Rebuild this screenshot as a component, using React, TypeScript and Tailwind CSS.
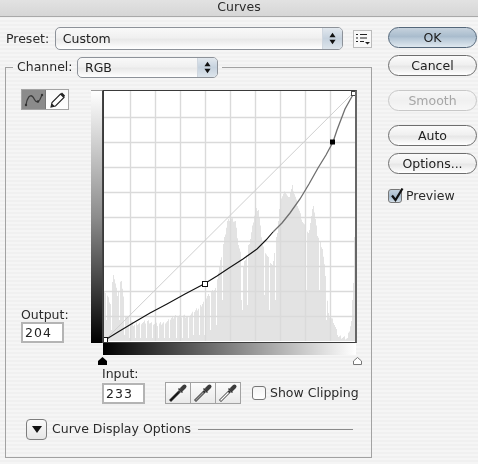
import type { ReactNode } from "react"

const envelope: [number, number][] = [
  [104, 292], [105, 290], [110, 302], [113, 272], [117, 293], [121, 278], [125, 313], [133, 323],
  [147, 320], [157, 323], [167, 320], [175, 314], [188, 315], [200, 305], [207, 295], [215, 287],
  [220, 260], [227, 220], [230, 217], [235, 220], [238, 243], [243, 265], [250, 237], [255, 208],
  [258, 208], [262, 243], [267, 255], [272, 265], [277, 230], [280, 197], [285, 190], [288, 197],
  [292, 185], [297, 203], [302, 220], [308, 233], [313, 203], [317, 233], [322, 247], [325, 273],
  [328, 313], [333, 320], [338, 335], [347, 337], [351, 320], [353, 280], [354, 235], [355, 300],
]

// notches in the comb: page x -> top of the short bar
const lowBars: Record<number, number> = {
  106: 320, 111: 330, 119: 320, 124: 335, 129: 338, 135: 338, 140: 338, 146: 338, 152: 338, 158: 338,
  164: 338, 169: 338, 176: 338, 182: 338, 188: 338, 193: 335, 199: 335, 204: 335, 210: 330, 216: 325,
  222: 300, 241: 300, 242: 310, 247: 305, 264: 295, 269: 310, 275: 300, 306: 290, 319: 290, 326: 320,
}

function topAt(x: number) {
  if (lowBars[x]) return lowBars[x]
  for (let i = 1; i < envelope.length; i++) {
    const [x1, y1] = envelope[i]
    const [x0, y0] = envelope[i - 1]
    if (x <= x1) return y0 + ((y1 - y0) * (x - x0)) / (x1 - x0) + ((x * 7) % 4)
  }
  return 341
}

const histogram = Array.from({ length: 251 }, (_, i) => {
  const x = 104 + i
  return `M${x} ${topAt(x).toFixed(1)}V341H${x + 1}V${topAt(x).toFixed(1)}Z`
}).join("")

const gridX = [130, 155, 180, 205, 230, 255, 280, 305, 330]
const gridY = [117, 142, 167, 192, 217, 241, 266, 291, 316]

const darkCurve =
  "105,340 118,332 133,323 150,313 167,304 185,294 204,284 217,276 229,268 243,259 257,249 266,240 273,232"
const lightCurve = "273,232 282,223 290,213 300,199 309,184 318,168 326,155 333,142 337,130 345,109 350,100 354,93"

function Graph() {
  return (
    <div className="w-[254px] h-[253px] border border-[#3a3a3a] border-r-2 border-r-[#666] bg-white">
      <svg viewBox="104 91 251 251" className="block w-[251px] h-[251px]">
        <path d={histogram} fill="#e3e3e3" />
        {gridX.map((x) => (
          <line key={x} x1={x + 0.5} x2={x + 0.5} y1={91} y2={341} stroke="#dadada" strokeWidth={1.4} />
        ))}
        {gridY.map((y) => (
          <line key={y} x1={104} x2={355} y1={y + 0.5} y2={y + 0.5} stroke="#dadada" strokeWidth={1.4} />
        ))}
        <line x1={104} y1={341} x2={355} y2={91} stroke="#cfcfcf" strokeWidth={1} />
        <polyline points={darkCurve} fill="none" stroke="#111" strokeWidth={1.1} />
        <polyline points={lightCurve} fill="none" stroke="#6f6f6f" strokeWidth={1.3} />
        <rect x={102.5} y={337.5} width={5} height={5} fill="#fff" stroke="#111" />
        <rect x={202.5} y={281.5} width={5} height={5} fill="#fff" stroke="#111" />
        <rect x={330} y={139.5} width={5} height={5} fill="#000" />
        <rect x={351.5} y={91.5} width={4} height={4} fill="#fff" stroke="#444" />
      </svg>
    </div>
  )
}

function AquaButton({
  children,
  variant = "normal",
  className = "",
}: {
  children: ReactNode
  variant?: "normal" | "default" | "disabled"
  className?: string
}) {
  const tone =
    variant === "default"
      ? "border-[#54677a] bg-[linear-gradient(#c6d2dd,#a9bccd_45%,#b6c7d6_55%,#dfe8ef)] text-[#1c1c1c]"
      : variant === "disabled"
        ? "border-[#c8c8c8] bg-[linear-gradient(#f7f7f7,#f0f0f0_50%,#f7f7f7)] text-[#a6a6a6]"
        : "border-[#6e6e6e] bg-[linear-gradient(#fbfbfb,#f0f0f0_45%,#e7e7e7_55%,#ffffff)] text-[#222]"
  return (
    <button
      className={`w-[89px] h-[21px] rounded-full border text-center leading-[18px] ${tone} ${className}`}
    >
      {children}
    </button>
  )
}

function Stepper() {
  return (
    <svg viewBox="0 0 8 14" className="w-[7px] h-[13px]">
      <path d="M4 0.5 7.5 5.5H0.5Z M4 13.5 7.5 8.5H0.5Z" fill="#111" />
    </svg>
  )
}

function PopUp({ label, className }: { label: string; className: string }) {
  return (
    <div
      className={`flex items-stretch rounded-[5px] border border-[#8d9299] overflow-hidden bg-[linear-gradient(#f9f9f9,#f0f0f0_45%,#e9e9e9_55%,#fff)] ${className}`}
    >
      <span className="flex-1 pl-[7px] pt-[2px] self-center text-[#222]">{label}</span>
      <span className="w-[20px] flex items-center justify-center border-l border-[#d0d7df] bg-[linear-gradient(#e2e8ee,#c6d2de_50%,#dde5ec)]">
        <Stepper />
      </span>
    </div>
  )
}

function TextBox({ value }: { value: string }) {
  return (
    <div className="w-[43px] h-[21px] border-2 border-[#b4b4b4] bg-white pl-[2px] leading-[17px] tracking-[1px] text-[#222]">
      {value}
    </div>
  )
}

function Checkbox({ checked = false }: { checked?: boolean }) {
  return (
    <span
      className={`relative w-[14px] h-[14px] rounded-[3px] border border-[#777] shrink-0 ${
        checked
          ? "bg-[linear-gradient(#c3d0dc,#a7bbcd_55%,#d3dee8)]"
          : "bg-[linear-gradient(#f4f4f4,#fff)]"
      }`}
    >
      {checked && (
        <svg viewBox="0 0 16 16" className="absolute -top-[3px] left-0 w-[16px] h-[16px]">
          <path d="M3 8.5 6.5 13 13.5 1.5" fill="none" stroke="#111" strokeWidth={2.2} />
        </svg>
      )}
    </span>
  )
}

function Eyedropper({ liquid }: { liquid: string }) {
  return (
    <button className="-ml-px first:ml-0 w-[26px] h-[22px] flex items-center justify-center border border-[#a2a2a2] bg-[linear-gradient(#fcfcfc,#e9e9e9)]">
      <svg viewBox="0 0 20 20" className="w-[20px] h-[20px]">
        <line x1={2} y1={18} x2={12} y2={8} stroke="#333" strokeWidth={2.8} />
        <line x1={2.5} y1={17.5} x2={10.5} y2={9.5} stroke={liquid} strokeWidth={1.4} />
        <line x1={10.5} y1={5.5} x2={14.5} y2={9.5} stroke="#333" strokeWidth={1.6} />
        <line x1={14} y1={6} x2={16.5} y2={3.5} stroke="#3d3d3d" strokeWidth={4} strokeLinecap="round" />
      </svg>
    </button>
  )
}

function ToolButtons() {
  return (
    <div className="flex w-[48px] h-[21px] border border-[#a4a4a4]">
      <div className="w-[24px] bg-[#8b8b8b] flex items-center justify-center border-r border-[#777]">
        <svg viewBox="0 0 20 16" className="w-[20px] h-[16px]">
          <path d="M2 13C3 6 6 2 8.5 4.5S11 11 14 9.5 17 4 18 3" fill="none" stroke="#3a3a3a" strokeWidth={1.3} />
          <circle cx={2} cy={13} r={1.2} fill="#333" />
          <circle cx={14} cy={9.5} r={1.2} fill="#333" />
          <circle cx={18} cy={3} r={1.2} fill="#333" />
        </svg>
      </div>
      <div className="flex-1 bg-[linear-gradient(#f8f8f8,#fff)] flex items-center justify-center">
        <svg viewBox="0 0 18 18" className="w-[18px] h-[18px]">
          <path d="M3 16 4 11.5 12.5 3 16 6.5 7.5 15Z" fill="#fff" stroke="#222" strokeWidth={1.1} />
          <path d="M3 16 4 12.5 6.5 15Z M12.5 3 14 1.5 17 4.5 16 6.5Z" fill="#222" />
        </svg>
      </div>
    </div>
  )
}

export default function App() {
  return (
    <div className="w-[478px] h-[464px] overflow-hidden text-[12.5px] font-['DejaVu_Sans',sans-serif] text-[#2a2a2a] bg-[repeating-linear-gradient(#f0f0f0_0px,#f0f0f0_2px,#f5f5f5_2px,#f5f5f5_4px)] blur-[0.35px]">
      <div className="h-[17px] border-b border-[#a9a9a9] bg-[linear-gradient(#e2e2e2,#d6d6d6)] text-center leading-[14px]">
        Curves
      </div>

      <div className="flex">
        <div className="w-[372px] pl-[5px]">
          <div className="mt-[10px] flex items-center h-[23px]">
            <span className="w-[50px] pl-px pt-[2px]">Preset:</span>
            <PopUp label="Custom" className="w-[289px] h-[23px]" />
            <div className="ml-[10px] w-[19px] h-[18px] flex items-center justify-center border border-[#bbb] bg-[#f8f8f8]">
              <svg viewBox="0 0 15 12" className="w-[15px] h-[12px]">
                <path d="M1 1.5h2M5 1.5h7M1 5h2M5 5h7M1 8.5h2M5 8.5h4" stroke="#222" fill="none" />
                <path d="M10 9h5l-2.5 2.5Z" fill="#222" />
              </svg>
            </div>
          </div>

          <fieldset className="mt-[7px] w-[367px] h-[401px] border border-[#a2a2a2] min-w-0">
            <legend className="ml-[7px] px-[4px] flex items-center h-[21px]">
              <span className="w-[60px]">Channel:</span>
              <PopUp label="RGB" className="w-[141px] h-[21px]" />
            </legend>

            <div className="mt-[11px] flex">
              <div className="ml-[15px] w-[70px] h-[254px] flex flex-col justify-between">
                <ToolButtons />
                <div>
                  <div className="h-[15px] leading-[16px]">Output:</div>
                  <TextBox value="204" />
                </div>
              </div>

              <div className="w-[266px]">
                <div className="mt-px flex">
                  <div className="w-[12px] h-[253px] bg-[linear-gradient(#fff,#8c8c8c_50%,#000)] border-t border-t-[#999] border-r border-r-[#444]" />
                  <Graph />
                </div>
                <div className="ml-[12px] w-[253px] h-[12px] bg-[linear-gradient(90deg,#000,#fff)]" />
                <div className="mt-[2px] ml-[7px] w-[264px] flex justify-between">
                  <svg viewBox="0 0 9 8" className="w-[9px] h-[8px]">
                    <path d="M4.5 0 9 4V8H0V4Z" fill="#000" />
                  </svg>
                  <svg viewBox="0 0 9 8" className="w-[9px] h-[8px]">
                    <path d="M4.5 .5 8.5 4V7.5H.5V4Z" fill="#fff" stroke="#777" />
                  </svg>
                </div>
                <div className="mt-[2px] ml-[11px] h-[15px] leading-[14px]">Input:</div>
                <div className="ml-[11px] w-max flex items-center whitespace-nowrap">
                  <TextBox value="233" />
                  <div className="ml-[20px] flex">
                    <Eyedropper liquid="#111" />
                    <Eyedropper liquid="#999" />
                    <Eyedropper liquid="#fff" />
                  </div>
                  <span className="ml-[11px] flex items-center gap-[4px]">
                    <Checkbox />
                    Show Clipping
                  </span>
                </div>
              </div>
            </div>

            <div className="mt-[15px] ml-[20px] w-[327px] flex items-center">
              <button className="w-[21px] h-[21px] rounded-[4px] border border-[#7d7d7d] bg-[linear-gradient(#fafafa,#e6e6e6)] flex items-center justify-center">
                <svg viewBox="0 0 10 7" className="w-[10px] h-[7px]">
                  <path d="M0 0H10L5 7Z" fill="#111" />
                </svg>
              </button>
              <span className="ml-[5px] whitespace-nowrap">Curve Display Options</span>
              <span className="ml-[7px] flex-1 h-px bg-[#8a8a8a]" />
            </div>
          </fieldset>
        </div>

        <div className="ml-[16px] mt-[10px] flex flex-col">
          <AquaButton variant="default">OK</AquaButton>
          <AquaButton className="mt-[7px]">Cancel</AquaButton>
          <AquaButton variant="disabled" className="mt-[14px]">
            Smooth
          </AquaButton>
          <AquaButton className="mt-[14px]">Auto</AquaButton>
          <AquaButton className="mt-[7px]">Options...</AquaButton>
          <div className="mt-[13px] flex items-center gap-[4px]">
            <Checkbox checked />
            Preview
          </div>
        </div>
      </div>
    </div>
  )
}
